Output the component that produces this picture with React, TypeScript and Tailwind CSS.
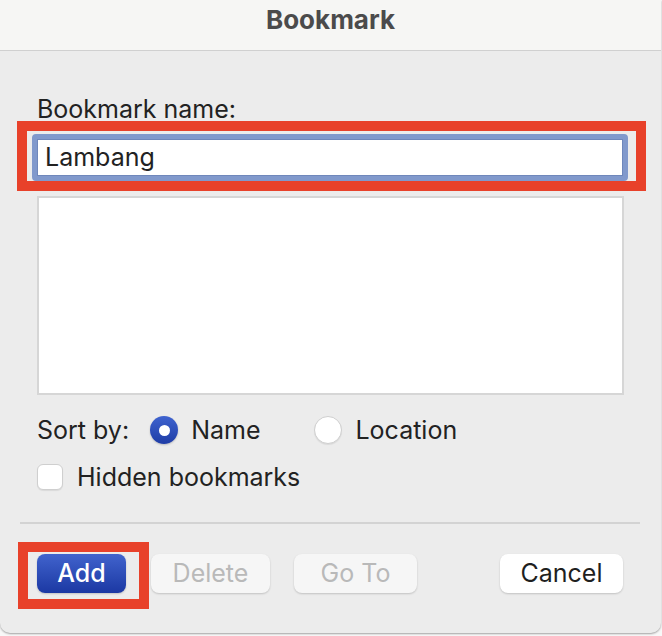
const font = { fontFamily: 'Inter, "Liberation Sans", sans-serif' };

const Radio = ({ checked }: { checked?: boolean }) =>
  checked ? (
    <span className="flex h-[28px] w-[28px] items-center justify-center rounded-full bg-gradient-to-b from-[#3f63cf] to-[#1f3da6] shadow-[0_1px_2px_rgba(0,0,0,0.2)]">
      <span className="block h-[11px] w-[11px] rounded-full bg-white" />
    </span>
  ) : (
    <span className="block h-[28px] w-[28px] rounded-full border border-[#cfcfcf] bg-white shadow-[0_1px_1px_rgba(0,0,0,0.08)]" />
  );

const Button = ({ label, kind }: { label: string; kind: "primary" | "disabled" | "normal" }) => {
  const look =
    kind === "primary"
      ? "bg-gradient-to-b from-[#4163cd] to-[#1c38a3] text-white font-medium"
      : kind === "disabled"
      ? "bg-[#f6f6f6] text-[#b9b9b9]"
      : "bg-white text-[#1f1f1f]";
  return (
    <div
      className={`flex h-[39px] items-center justify-center rounded-[8px] pt-[1px] text-[25px] shadow-[0_1px_2px_rgba(0,0,0,0.18)] ${look}`}
    >
      {label}
    </div>
  );
};

export default function App() {
  return (
    <div className="h-[636px] w-[662px] overflow-hidden bg-[#f8f8f8]" style={font}>
      <div className="flex h-[633px] w-[661px] flex-col overflow-hidden rounded-b-[10px] bg-[#ececec] shadow-[0_1px_2px_rgba(0,0,0,0.35)]">
        {/* title bar */}
        <div className="flex h-[51px] items-start justify-center border-b border-[#d0d0d0] bg-[#f6f6f4] pt-[4px]">
          <span className="text-[26px] font-bold leading-[32px] text-[#4b4b4b]">Bookmark</span>
        </div>

        <div className="ml-[37px] mt-[44px] text-[25px] leading-[28px] text-[#222]">Bookmark name:</div>

        {/* highlighted name field */}
        <div className="ml-[17px] mt-[-2px] h-[70px] w-[629px] border-[10px] border-[#e8412a] pl-[5px] pr-[8px] pt-[3px]">
          <div className="h-[47px] rounded-[4px] border-[5px] border-[#8199cc] bg-white">
            <div className="flex h-full items-center border border-[#6f87bb] pl-[7px] pt-[1px] text-[25px] text-[#222]">
              Lambang
            </div>
          </div>
        </div>

        {/* list */}
        <div className="ml-[37px] mt-[5px] h-[199px] w-[587px] border-2 border-[#d6d6d6] bg-white" />

        {/* sort by */}
        <div className="ml-[37px] mt-[21px] flex h-[28px] items-center text-[25px] text-[#222]">
          <span className="pt-[2px]">Sort by:</span>
          <span className="ml-[21px]">
            <Radio checked />
          </span>
          <span className="ml-[13px] pt-[2px]">Name</span>
          <span className="ml-[54px]">
            <Radio />
          </span>
          <span className="ml-[13px] pt-[2px]">Location</span>
        </div>

        {/* hidden bookmarks */}
        <div className="ml-[37px] mt-[20px] flex h-[26px] items-center text-[25px] text-[#222]">
          <span className="block h-[26px] w-[26px] rounded-[6px] border border-[#cfcfcf] bg-white shadow-[0_1px_1px_rgba(0,0,0,0.08)]" />
          <span className="ml-[14px] pt-[2px]">Hidden bookmarks</span>
        </div>

        <div className="ml-[20px] mt-[32px] h-[2px] w-[620px] bg-[#d3d3d3]" />

        {/* buttons */}
        <div className="mt-[18px] flex items-start">
          <div className="ml-[18px] h-[67px] w-[131px] border-[10px] border-[#e8412a] pl-[9px] pt-[2px]">
            <div className="w-[89px]">
              <Button label="Add" kind="primary" />
            </div>
          </div>
          <div className="ml-[2px] mt-[12px] w-[119px]">
            <Button label="Delete" kind="disabled" />
          </div>
          <div className="ml-[24px] mt-[12px] w-[123px]">
            <Button label="Go To" kind="disabled" />
          </div>
          <div className="ml-auto mr-[38px] mt-[12px] w-[123px]">
            <Button label="Cancel" kind="normal" />
          </div>
        </div>
      </div>
    </div>
  );
}
